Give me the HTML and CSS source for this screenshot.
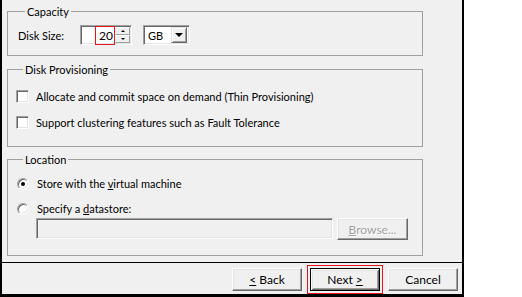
FILE: index.html
```html
<!DOCTYPE html>
<html lang="en">
  <head>
    <meta charset="UTF-8" />
    <title>Create Disk</title>
    <link rel="stylesheet" href="styles.css">
  </head>
  <body>
    <div class="window">
      <div class="panel">
        <fieldset class="group capacity">
          <legend>Capacity</legend>
          <div class="size-row">
            <span class="size-label">Disk Size:</span>
            <div class="spin sunken">
              <span class="spin-value"><span class="mark">20</span></span>
              <span class="spin-btns">
                <span class="spin-btn"><i class="tri up"></i></span>
                <span class="spin-btn"><i class="tri down"></i></span>
              </span>
            </div>
            <div class="combo sunken">
              <span class="combo-text">GB</span>
              <span class="combo-btn raised"><i class="tri down big"></i></span>
            </div>
          </div>
        </fieldset>

        <fieldset class="group provisioning">
          <legend>Disk Provisioning</legend>
          <label class="option">
            <span class="check sunken"></span>
            <span>Allocate and commit space on demand (Thin Provisioning)</span>
          </label>
          <label class="option">
            <span class="check sunken"></span>
            <span>Support clustering features such as Fault Tolerance</span>
          </label>
        </fieldset>

        <fieldset class="group location">
          <legend>Location</legend>
          <label class="option">
            <span class="radio on"></span>
            <span>Store with the <u>v</u>irtual machine</span>
          </label>
          <label class="option">
            <span class="radio"></span>
            <span>Specify a <u>d</u>atastore:</span>
          </label>
          <div class="store-row">
            <div class="path sunken"></div>
            <button class="btn" disabled><u>B</u>rowse...</button>
          </div>
        </fieldset>
      </div>
      <div class="footer">
        <button class="btn"><u>&lt;</u> Back</button>
        <button class="btn default marked">Next <u>&gt;</u></button>
        <button class="btn">Cancel</button>
      </div>
    </div>
  </body>
</html>
```

FILE: styles.css
```css
body {
  margin: 0;
  background: #fff;
  font-family: Lato, "Liberation Sans", Arial, sans-serif;
  font-size: 11px;
  line-height: 13px;
  color: #000;
}
u {
  text-decoration: underline;
  text-underline-offset: 1px;
}
.window {
  width: 460px;
  border: 2px solid #000;
  border-top: 0;
  border-bottom-width: 3px;
  background: #f0f0f0;
}
.panel {
  height: 263px;
  box-sizing: border-box;
  padding: 5px 0 0 5px;
  border-bottom: 1px solid #000;
}
.sunken {
  box-sizing: border-box;
  border: 1px solid;
  border-color: #a0a0a0 #fff #fff #a0a0a0;
  box-shadow: inset 1px 1px #696969, inset -1px -1px #e3e3e3;
  background: #fff;
}
.raised {
  box-sizing: border-box;
  border: 1px solid;
  border-color: #e3e3e3 #696969 #696969 #e3e3e3;
  box-shadow: inset 1px 1px #fff, inset -1px -1px #a0a0a0;
  background: #f0f0f0;
}

/* group boxes */
.group {
  width: 416px;
  box-sizing: border-box;
  margin: 0;
  padding: 0;
  border: 1px solid #a0a0a0;
  min-width: 0;
}
.group legend {
  margin-left: 7px;
  padding: 0 2px;
  line-height: 13px;
}
.capacity {
  padding: 7px 0 10px 10px;
}
.provisioning {
  margin-top: 7px;
  padding: 14px 0 17px 8px;
}
.location {
  margin-top: 6px;
  padding: 11px 0 15px 8px;
}

/* disk size */
.size-row {
  display: flex;
  align-items: center;
  height: 20px;
}
.size-label {
  width: 62px;
}
.spin {
  width: 52px;
  height: 20px;
  display: flex;
  padding: 1px;
}
.spin-value {
  flex: 1;
  display: flex;
  justify-content: flex-end;
  align-items: center;
}
.mark {
  border: 1px solid #e8141c;
  padding: 2px 1px 2px 3px;
  font-size: 12px;
}
.spin-btns {
  width: 15px;
  display: flex;
  flex-direction: column;
}
.spin-btn {
  flex: 1;
  display: flex;
  align-items: center;
  justify-content: center;
  background: #f0f0f0;
  border: 1px solid;
  border-color: #fff #a0a0a0 #a0a0a0 #fff;
}
.tri {
  width: 0;
  height: 0;
  border-left: 2px solid transparent;
  border-right: 2px solid transparent;
}
.tri.up {
  border-bottom: 2px solid #000;
}
.tri.down {
  border-top: 2px solid #000;
}
.tri.big {
  border-left-width: 4px;
  border-right-width: 4px;
  border-top-width: 4px;
}
.combo {
  margin-left: 11px;
  width: 47px;
  height: 20px;
  display: flex;
  align-items: center;
  padding: 2px;
}
.combo-text {
  flex: 1;
  padding-left: 2px;
}
.combo-btn {
  width: 16px;
  height: 16px;
  display: flex;
  align-items: center;
  justify-content: center;
}

/* options */
.option {
  display: flex;
  align-items: center;
  height: 13px;
  gap: 7px;
}
.option + .option {
  margin-top: 13px;
}
.location .option + .option {
  margin-top: 12px;
}
.check {
  width: 13px;
  height: 13px;
}
.radio {
  width: 12px;
  height: 12px;
  margin: 0 1px 0 1px;
  box-sizing: border-box;
  border-radius: 50%;
  border: 1px solid;
  border-color: #a0a0a0 #fff #fff #a0a0a0;
  box-shadow: inset 1px 1px #696969, inset -1px -1px #e3e3e3;
  background: #fff;
  display: flex;
  align-items: center;
  justify-content: center;
}
.radio.on::after {
  content: "";
  width: 4px;
  height: 4px;
  border-radius: 50%;
  background: #000;
}
.store-row {
  display: flex;
  align-items: flex-start;
  margin-top: 3px;
  padding-left: 20px;
  gap: 4px;
}
.path {
  width: 297px;
  height: 21px;
  background: #f0f0f0;
}

/* buttons */
.btn {
  width: 70px;
  height: 23px;
  box-sizing: border-box;
  padding: 0;
  font: inherit;
  font-size: 12px;
  color: #000;
  background: #f0f0f0;
  border: 1px solid;
  border-color: #fff #696969 #696969 #fff;
  box-shadow: inset -1px -1px #a0a0a0, inset 1px 1px #e3e3e3;
}
.btn:disabled {
  width: 71px;
  height: 22px;
  color: #a0a0a0;
  text-shadow: 1px 1px #fff;
}
.btn.default {
  border: 1px solid #000;
  box-shadow: inset 1px 1px #fff, inset -1px -1px #696969, inset 2px 2px #e3e3e3, inset -2px -2px #a0a0a0;
}
.btn.marked {
  outline: 1px solid #e8141c;
  outline-offset: 2px;
}
.footer {
  height: 31px;
  box-sizing: border-box;
  padding: 5px 4px 0 0;
  display: flex;
  justify-content: flex-end;
  align-items: flex-start;
  gap: 8px;
}
```
